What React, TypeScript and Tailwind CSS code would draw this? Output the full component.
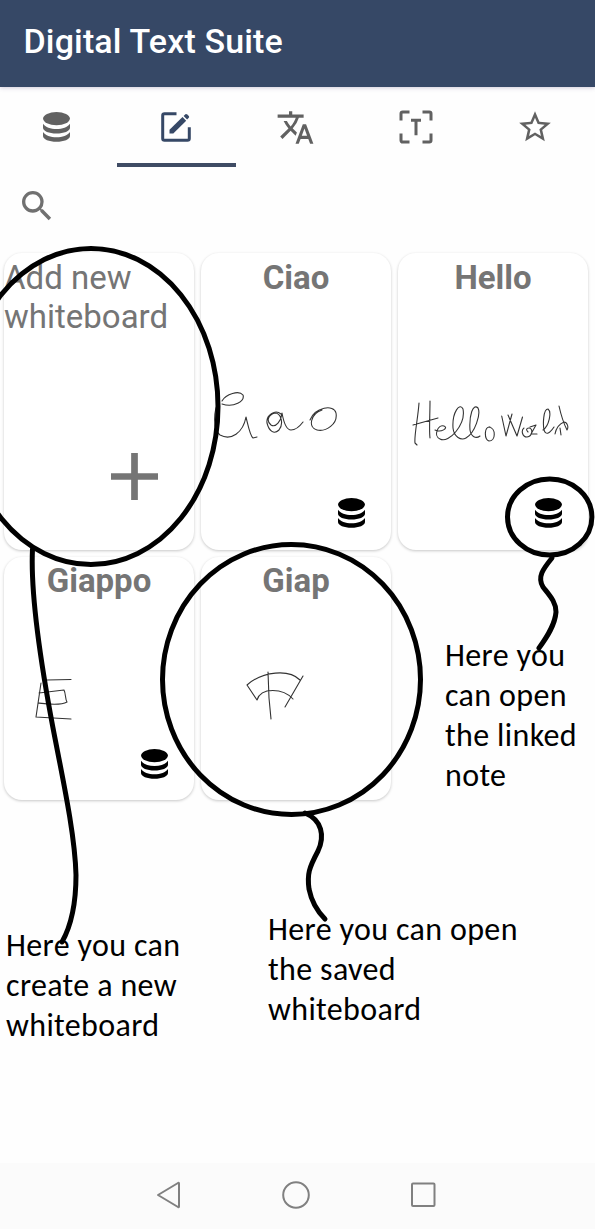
import React from "react";
import { MdSearch, MdStarBorder, MdTranslate } from "react-icons/md";

function DatabaseIcon({ className = "" }: { className?: string }) {
  return (
    <svg width="27" height="30" viewBox="0 0 27 30" fill="currentColor" className={className}>
      <ellipse cx="13.5" cy="6.6" rx="13.4" ry="6.6" />
      <path d="M0 11.8C2.5 15.4 7.5 17.1 13.5 17.1S24.5 15.4 27 11.8V15.8C27 19.2 21 21.6 13.5 21.6S0 19.2 0 15.8Z" />
      <path d="M0 20C2.5 23.6 7.5 25.3 13.5 25.3S24.5 23.6 27 20V24C27 27.4 21 29.8 13.5 29.8S0 27.4 0 24Z" />
    </svg>
  );
}

function EditIcon() {
  return (
    <svg width="30" height="30" viewBox="0 0 30 30" fill="none">
      <path d="M15.5 1.8H3.5Q1.7 1.8 1.7 3.6V26.4Q1.7 28.2 3.5 28.2H26.5Q28.3 28.2 28.3 26.4V15.2" stroke="currentColor" strokeWidth="3" />
      <path d="M8.5 17.8 21.5 5 25.2 8.7 12.3 21.5H8.5Z" fill="currentColor" />
      <path d="M22.6 4.1 24.4 2.3Q25.3 1.6 26.2 2.4L27.8 4Q28.6 4.9 27.8 5.8L26.1 7.6Z" fill="currentColor" />
    </svg>
  );
}

function ScanTextIcon() {
  return (
    <svg width="34" height="34" viewBox="0 0 34 34" fill="none" stroke="currentColor" strokeWidth="3">
      <path d="M2 10.5V3.7Q2 2 3.7 2H10.5M23.5 2H30.3Q32 2 32 3.7V10.5M32 23.5V30.3Q32 32 30.3 32H23.5M10.5 32H3.7Q2 32 2 30.3V23.5" />
      <path d="M12 10.3H22M17 10.3V25.3" />
    </svg>
  );
}

function Tab({ active = false, children }: { active?: boolean; children: React.ReactNode }) {
  return (
    <button
      className={
        active
          ? "flex h-[80px] items-center justify-center border-b-[4px] border-[#3f4c64] pt-[4px] text-[#364866]"
          : "flex h-[80px] items-center justify-center border-b-[4px] border-transparent pt-[4px] text-[#616161]"
      }
    >
      {children}
    </button>
  );
}

type CardProps = { title: string; linked?: boolean; compact?: boolean; viewBox: string; sketch: string };

function Card({ title, linked = false, compact = false, viewBox, sketch }: CardProps) {
  return (
    <article
      className={
        compact
          ? "flex flex-col rounded-[18px] bg-white pt-[4px] pb-[21px] shadow-[0_1px_3px_rgba(0,0,0,0.22)]"
          : "flex flex-col rounded-[18px] bg-white pt-[5px] pb-[22px] shadow-[0_1px_3px_rgba(0,0,0,0.22)]"
      }
    >
      <h2 className={compact ? "h-[40px] text-center text-[33px] leading-[39px] font-bold text-[#757575]" : "h-[39px] text-center text-[33px] leading-[39px] font-bold text-[#757575]"}>
        {title}
      </h2>
      <svg viewBox={viewBox} className="w-full shrink-0" fill="none" stroke="#333" strokeWidth="1.1" strokeLinecap="round" strokeLinejoin="round">
        <path d={sketch} />
      </svg>
      {linked && <DatabaseIcon className="mt-auto mr-[26px] self-end text-black" />}
    </article>
  );
}

const ciao =
  "M222 401C226 394 239 390 243 395C245 401 234 408 222 404M219 400C213 412 213 430 220 435C231 441 243 433 246 417C248 425 250 436 253 438L257 437M281 414C275 409 266 415 267 423C269 431 274 435 279 430C284 424 281 413 275 413C268 415 266 421 271 425C276 428 281 421 282 413C284 424 287 430 291 430C296 430 300 426 303 422M310 420C315 407 334 404 336 413C338 424 326 432 317 430C308 428 310 414 322 410";
const hello =
  "M419 403C418 418 414 436 415 443L417 445M430 401C430 415 429 430 430 438M413 425L438 418M435 430C441 433 449 428 444 426C438 424 433 436 440 439C449 444 466 424 463 409C460 402 452 412 453 428C454 437 461 441 466 438C475 433 481 414 478 408C473 403 469 415 470 430C471 437 476 439 480 436M490 427C484 426 484 439 489 441C496 441 496 428 489 427M501.7 416L506 436L512 414M508 415L517 436L522.5 417M524 428C521 430 522 437 527 437C533 436 533 428 529 428C526 428 526 430 528 432M530 427L536 425L531 434L537 434M543 430C549 426 552 412 548 409C543 409 543 425 544 430C546 436 550 433 554 427M559 406C561 415 563 422 567 430C569 427 567 422 564 422C559 424 556 429 555 434M560 428L561 435";
const giappo =
  "M47 680L71 679.5M41 683L36 717L71 719M39 693L64 690C66 694 65 699 67 702C60 706 46 704 38 703";
const giap =
  "M247 685L257 700M247 685C263 671 289 669 300 680M303 676L285 707M257 700C261 687 283 688 293 699M268 672L269 698L271 719";

function Annotation({ className, lines }: { className: string; lines: string[] }) {
  return (
    <p className={"absolute text-[32px] leading-[40px] tracking-[0.35px] whitespace-nowrap text-black [font-family:Carlito,Lato,sans-serif] " + className}>
      {lines.map((line) => (
        <span key={line} className="block">{line}</span>
      ))}
    </p>
  );
}

export default function App() {
  return (
    <div className="relative flex h-[1229px] w-[595px] flex-col overflow-hidden bg-[#fefefe] [font-family:Roboto,sans-serif]">
      <header className="flex h-[87px] shrink-0 items-center bg-[#364866] pb-[5px] pl-[23.5px] shadow-[0_1px_4px_rgba(80,60,120,0.25)]">
        <h1 className="text-[34px] font-medium tracking-[0.15px] whitespace-nowrap text-white">Digital Text Suite</h1>
      </header>
      <nav className="-ml-[3px] grid w-[598px] shrink-0 grid-cols-5">
        <Tab><DatabaseIcon /></Tab>
        <Tab active><EditIcon /></Tab>
        <Tab><MdTranslate size={39} /></Tab>
        <Tab><ScanTextIcon /></Tab>
        <Tab><MdStarBorder size={38} /></Tab>
      </nav>
      <div className="flex h-[85px] shrink-0 items-center pb-[7px] pl-[17px] text-[#707070]">
        <MdSearch size={40} />
      </div>
      <main className="grid shrink-0 grid-cols-3 grid-rows-[297px_243px] gap-[7px] pt-px pr-[7px] pl-[4px]">
        <article className="flex flex-col rounded-[18px] bg-white shadow-[0_1px_3px_rgba(0,0,0,0.22)]">
          <p className="pt-[5px] text-[33px] leading-[39px] whitespace-nowrap text-[#757575]">
            Add new<br />whiteboard
          </p>
          <svg width="47" height="47" viewBox="0 0 47 47" className="mt-auto mr-[36px] mb-[50px] self-end" stroke="#757575" strokeWidth="6.7">
            <path d="M0 23.5H47M23.5 0V47" />
          </svg>
        </article>
        <Card title="Ciao" linked viewBox="201 297 190 190" sketch={ciao} />
        <Card title="Hello" linked viewBox="398 297 190 190" sketch={hello} />
        <Card title="Giappo" linked compact viewBox="4 601 190 140" sketch={giappo} />
        <Card title="Giap" compact viewBox="201 601 190 140" sketch={giap} />
      </main>
      <footer className="mt-auto flex h-[66px] shrink-0 items-center bg-[#fbfbfb] pr-[159px] pb-[3px] pl-[155px]">
        <svg viewBox="0 0 281 30" className="w-full" fill="none" stroke="#808080" strokeWidth="2" strokeLinejoin="round">
          <path d="M3 15 23 3Q24 2.5 24 3.5V26.5Q24 27.5 23 27Z" />
          <circle cx="141" cy="15" r="12.8" />
          <rect x="257" y="3.5" width="22.5" height="22.5" rx="1" />
        </svg>
      </footer>

      <svg className="pointer-events-none absolute inset-0" width="595" height="1229" viewBox="0 0 595 1229" fill="none" stroke="#000" strokeWidth="5" strokeLinecap="round">
        <ellipse cx="91" cy="406.5" rx="127" ry="158" />
        <ellipse cx="291.5" cy="679.5" rx="129" ry="135" />
        <ellipse cx="549.7" cy="517" rx="42.2" ry="38" />
        <path d="M32.5 549C30 600 43 675 53 728C63 780 75 835 76 875C76 906 71 926 62 942" />
        <path d="M305 813C322 820 325 836 318 851C309 868 307 874 309 889C311 899 316 910 325 919" />
        <path d="M552 558C543 569 537 577 543 587C550 596 556 602 556 612C555 625 547 637 539 648" />
      </svg>
      <Annotation className="top-[636px] left-[445px]" lines={["Here you", "can open", "the linked", "note"]} />
      <Annotation className="top-[926px] left-[6px]" lines={["Here you can", "create a new", "whiteboard"]} />
      <Annotation className="top-[910px] left-[268px]" lines={["Here you can open", "the saved", "whiteboard"]} />
    </div>
  );
}
